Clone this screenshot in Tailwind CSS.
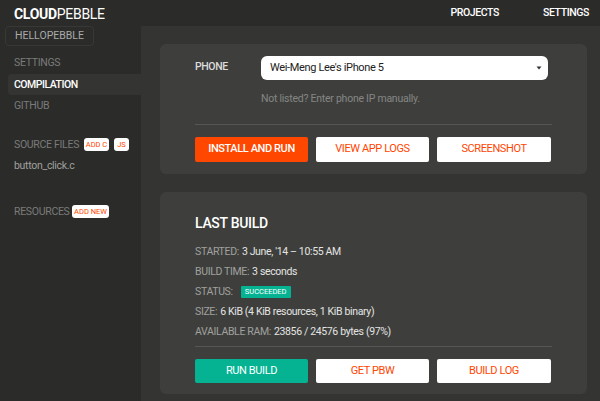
<!DOCTYPE html>
<html lang="en">
<head>
  <meta charset="UTF-8">
  <title>CloudPebble</title>
  <script src="https://cdn.jsdelivr.net/npm/@tailwindcss/browser@4"></script>
</head>
<body class="bg-[#343533] font-['Roboto',sans-serif] text-[#a0a19e] overflow-hidden">
  <div class="w-[600px] h-[401px] flex flex-col overflow-hidden">
    <!-- Header -->
    <header class="h-[26px] shrink-0 bg-[#2b2b2a] flex items-center justify-between pl-[14px] pr-[11px] text-white">
      <span class="text-[14px] leading-none tracking-[-0.3px] pt-[1px]"><b class="font-bold">CLOUD</b><span>PEBBLE</span></span>
      <nav class="flex gap-[44px] text-[10.5px] font-medium tracking-[-0.4px]">
        <span>PROJECTS</span>
        <span>SETTINGS</span>
      </nav>
    </header>

    <div class="flex flex-1 min-h-0">
      <!-- Sidebar -->
      <aside class="w-[141px] shrink-0 bg-[#2b2b2a] text-[10.5px] text-[#7a7b79] tracking-[-0.3px]">
        <div class="ml-[5px] w-[89px] h-[20px] border border-[#383937] rounded-[4px] flex items-center pl-[9px] text-[#a9aaa8] tracking-normal">HELLOPEBBLE</div>
        <div class="mt-[6px] h-[21px] flex items-center pl-[14px]">SETTINGS</div>
        <div class="ml-[8px] mt-[1px] h-[21px] flex items-center pl-[6px] bg-[#343533] rounded-l-[4px] text-white font-medium tracking-[-0.5px]">COMPILATION</div>
        <div class="h-[21px] flex items-center pl-[14px]">GITHUB</div>
        <div class="mt-[18px] h-[21px] flex items-center pl-[14px]">
          <span class="w-[70px] shrink-0">SOURCE FILES</span>
          <span class="h-[13px] w-[25px] bg-white rounded-[3px] text-[#ff4500] text-[7.5px] tracking-normal flex items-center justify-center">ADD C</span>
          <span class="ml-[5px] h-[13px] w-[15px] bg-white rounded-[3px] text-[#ff4500] text-[7.5px] tracking-normal flex items-center justify-center">JS</span>
        </div>
        <div class="h-[21px] flex items-center pl-[14px] text-[#a0a19e]">button_click.c</div>
        <div class="mt-[25px] h-[21px] flex items-center pl-[14px]">
          <span class="w-[58px] shrink-0">RESOURCES</span>
          <span class="h-[13px] w-[37px] bg-white rounded-[3px] text-[#ff4500] text-[7.5px] tracking-normal flex items-center justify-center">ADD NEW</span>
        </div>
      </aside>

      <!-- Main -->
      <main class="flex-1 pl-[19px] pr-[13px] pt-[18px]">
        <section class="h-[130px] bg-[#3e3f3d] rounded-[6px] px-[35px] pt-[12px]">
          <div class="flex">
            <label class="w-[66px] text-[10.5px] font-medium text-[#dcdcdc] pt-[3px] tracking-[-0.4px]">PHONE</label>
            <div class="w-[287px] h-[24px] bg-white rounded-[6px] flex items-center justify-between pl-[9px] pr-[6px] text-[11px] text-[#222] tracking-[-0.35px]">
              <span>Wei-Meng Lee's iPhone 5</span>
              <svg width="6" height="4" viewBox="0 0 6 4"><path d="M0.5 0.5h5L3 3.5z" fill="#333"/></svg>
            </div>
          </div>
          <p class="ml-[66px] mt-[11px] text-[10.5px] text-[#858684] tracking-[-0.25px]">Not listed? Enter phone IP manually.</p>
          <div class="mt-[17px] border-t border-[#565755] pt-[12px] flex gap-[8px] text-[11px] tracking-[-0.4px]">
            <button class="w-[113px] h-[25px] bg-[#ff4700] rounded-[2px] text-white font-medium">INSTALL AND RUN</button>
            <button class="w-[113px] h-[25px] bg-white rounded-[2px] text-[#ff4500]">VIEW APP LOGS</button>
            <button class="w-[114px] h-[25px] bg-white rounded-[2px] text-[#ff4500]">SCREENSHOT</button>
          </div>
        </section>

        <section class="mt-[18px] h-[202px] bg-[#3e3f3d] rounded-[6px] px-[35px] pt-[20px]">
          <h2 class="text-[14px] font-medium text-white leading-[22px] tracking-[-0.3px]">LAST BUILD</h2>
          <div class="mt-[8px] text-[10.5px] text-[#e4e4e2] tracking-[-0.35px]">
            <div class="h-[20px] flex items-center gap-[3px]"><span class="text-[#a0a19e]">STARTED:</span> 3 June, '14 – 10:55 AM</div>
            <div class="h-[20px] flex items-center gap-[3px]"><span class="text-[#a0a19e]">BUILD TIME:</span> 3 seconds</div>
            <div class="h-[20px] flex items-center"><span class="text-[#a0a19e]">STATUS:</span>
              <span class="ml-[8px] w-[50px] h-[12px] bg-[#05b393] rounded-[1px] text-white text-[7.5px] tracking-normal flex items-center justify-center">SUCCEEDED</span>
            </div>
            <div class="h-[20px] flex items-center gap-[3px]"><span class="text-[#a0a19e]">SIZE:</span> 6 KiB (4 KiB resources, 1 KiB binary)</div>
            <div class="h-[20px] flex items-center gap-[3px]"><span class="text-[#a0a19e]">AVAILABLE RAM:</span> 23856 / 24576 bytes (97%)</div>
          </div>
          <div class="mt-[4px] border-t border-[#565755] pt-[12px] flex gap-[8px] text-[11px] tracking-[-0.4px]">
            <button class="w-[113px] h-[24px] bg-[#05b393] rounded-[2px] text-white">RUN BUILD</button>
            <button class="w-[113px] h-[24px] bg-white rounded-[2px] text-[#ff4500]">GET PBW</button>
            <button class="w-[114px] h-[24px] bg-white rounded-[2px] text-[#ff4500]">BUILD LOG</button>
          </div>
        </section>
      </main>
    </div>
  </div>
</body>
</html>
